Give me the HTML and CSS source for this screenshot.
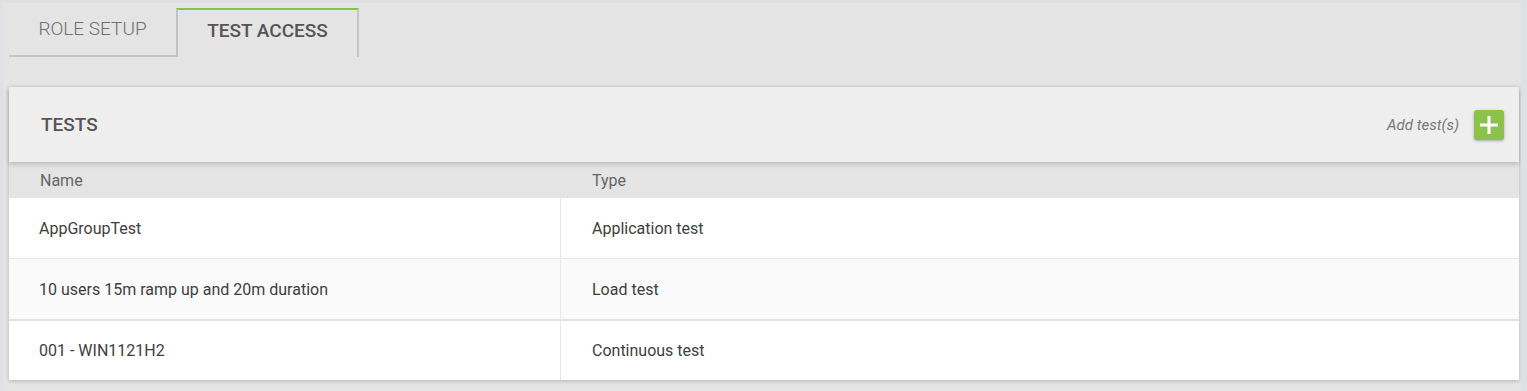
FILE: index.html
```html
<!DOCTYPE html>
<html>
  <head>
    <title>Role - Test access</title>
    <link rel="stylesheet" href="styles.css">
  </head>
  <body>
    <div class="page">
      <nav class="tabs">
        <div class="tab">ROLE SETUP</div>
        <div class="tab active">TEST ACCESS</div>
      </nav>

      <section class="panel">
        <header class="panel-header">
          <h2 class="panel-title">TESTS</h2>
          <div class="panel-actions">
            <span class="add-label">Add test(s)</span>
            <button class="add-button" title="Add test(s)">
              <svg viewBox="0 0 30 30" width="30" height="30">
                <path d="M15 6v18M6 15h18" stroke="#fff" stroke-width="3" fill="none" />
              </svg>
            </button>
          </div>
        </header>

        <div class="table">
          <div class="table-head">
            <div class="cell">Name</div>
            <div class="cell">Type</div>
          </div>
          <div class="table-row">
            <div class="cell">AppGroupTest</div>
            <div class="cell type">Application test</div>
          </div>
          <div class="table-row alt">
            <div class="cell">10 users 15m ramp up and 20m duration</div>
            <div class="cell type">Load test</div>
          </div>
          <div class="table-row last">
            <div class="cell">001 - WIN1121H2</div>
            <div class="cell type">Continuous test</div>
          </div>
        </div>
      </section>
    </div>
  </body>
</html>
```

FILE: styles.css
```css
* {
  margin: 0;
  padding: 0;
  box-sizing: border-box;
  font-family: "Roboto", "Liberation Sans", sans-serif;
}

html {
  background: #dfe0e3;
  height: 100%;
}

body {
  margin: 3px 6px 0 3px;
  min-height: calc(100% - 3px);
  background: #e4e4e4;
}

.page {
  padding: 5px 2px 0 6px;
}

/* Tabs */
.tabs {
  display: flex;
}

.tab {
  height: 49px;
  padding: 8px 0 0;
  font-size: 19px;
  line-height: 25px;
  font-weight: 300;
  color: #6f6f6f;
  border-bottom: 2px solid #c4c4c4;
  width: 167px;
  text-align: center;
}

.tab.active {
  width: 183px;
  font-weight: 500;
  color: #555;
  border-top: 2px solid #8bc34a;
  border-left: 2px solid #c4c4c4;
  border-right: 2px solid #c4c4c4;
  border-bottom: none;
}

/* Panel */
.panel {
  margin-top: 30px;
  background: #fff;
  box-shadow: 0 1px 4px rgba(0, 0, 0, 0.22);
}

.panel-header {
  position: relative;
  z-index: 1;
  display: flex;
  align-items: center;
  justify-content: space-between;
  height: 75px;
  padding: 0 15px 0 32px;
  background: #eeeeee;
  box-shadow: 0 2px 5px rgba(0, 0, 0, 0.2);
}

.panel-title {
  font-size: 19px;
  font-weight: 500;
  color: #555;
}

.panel-actions {
  display: flex;
  align-items: center;
  gap: 15px;
}

.add-label {
  font-size: 15px;
  font-style: italic;
  color: #777;
}

.add-button {
  display: flex;
  width: 30px;
  height: 30px;
  border: none;
  border-radius: 3px;
  background: #8bc34a;
  box-shadow: 0 1px 3px rgba(0, 0, 0, 0.3);
  cursor: pointer;
}

/* Table */
.table-head,
.table-row {
  display: grid;
  grid-template-columns: 551px 1fr;
}

.table-head {
  height: 36px;
  align-items: center;
  background: #e4e4e4;
  font-size: 16px;
  color: #666;
}

.table-head .cell {
  padding-left: 31px;
}

.table-head .cell + .cell {
  padding-left: 32px;
}

.table-row {
  height: 61px;
  font-size: 16px;
  color: #3e3e3e;
  border-top: 1px solid #e8e8e8;
}

.table-head + .table-row {
  height: 60px;
  border-top: none;
}

.table-row.alt {
  background: #fafafa;
}

.table-row.last {
  border-top: 2px solid #e2e2e2;
}

.table-row .cell {
  display: flex;
  align-items: center;
  padding-left: 30px;
}

.table-row .cell.type {
  border-left: 1px solid #e8e8e8;
  padding-left: 31px;
}
```
